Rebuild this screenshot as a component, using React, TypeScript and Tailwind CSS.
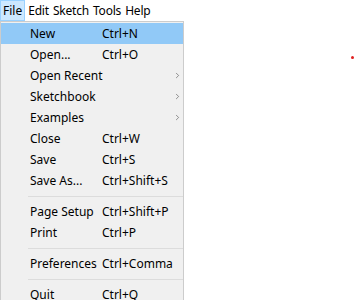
import { ChevronRight } from "lucide-react";

type Item =
  | { label: string; key?: string; sub?: boolean; active?: boolean }
  | "sep";

const items: Item[] = [
  { label: "New", key: "Ctrl+N", active: true },
  { label: "Open...", key: "Ctrl+O" },
  { label: "Open Recent", sub: true },
  { label: "Sketchbook", sub: true },
  { label: "Examples", sub: true },
  { label: "Close", key: "Ctrl+W" },
  { label: "Save", key: "Ctrl+S" },
  { label: "Save As...", key: "Ctrl+Shift+S" },
  "sep",
  { label: "Page Setup", key: "Ctrl+Shift+P" },
  { label: "Print", key: "Ctrl+P" },
  "sep",
  { label: "Preferences", key: "Ctrl+Comma" },
  "sep",
  { label: "Quit", key: "Ctrl+Q" },
];

export default function App() {
  return (
    <div
      className="relative w-[355px] h-[300px] bg-white overflow-hidden text-[12px] text-black whitespace-nowrap"
      style={{ fontFamily: '"Noto Sans", "Open Sans", sans-serif' }}
    >
      <div className="flex h-[21px] items-center">
        <div className="h-full px-[2px] flex items-center bg-[#cce8ff] border border-[#99d1ff]">
          File
        </div>
        <div className="flex gap-[4px] pl-[3px] tracking-[-0.2px]">
          <span>Edit</span>
          <span>Sketch</span>
          <span>Tools</span>
          <span>Help</span>
        </div>
      </div>

      <div className="w-[184px] bg-[#f0f0f0] border-t border-l border-r border-[#cccccc] pt-[1px]">
        {items.map((it, i) =>
          it === "sep" ? (
            <div key={i} className="h-[10px] flex items-center pl-[27px]">
              <div className="h-px w-full bg-[#dcdcdc]" />
            </div>
          ) : (
            <div
              key={i}
              className={`h-[21px] flex items-center ${
                it.active ? "bg-[#91c9f7]" : ""
              }`}
            >
              <span className="w-[101px] pl-[29px] shrink-0">{it.label}</span>
              <span className="flex-1">{it.key}</span>
              {it.sub && (
                <ChevronRight size={9} strokeWidth={1.5} className="mr-px text-[#444]" />
              )}
            </div>
          ),
        )}
      </div>

      <div className="absolute left-[351px] top-[56px] w-[3px] h-[3px] rounded-full bg-[#e02020]" />
    </div>
  );
}
